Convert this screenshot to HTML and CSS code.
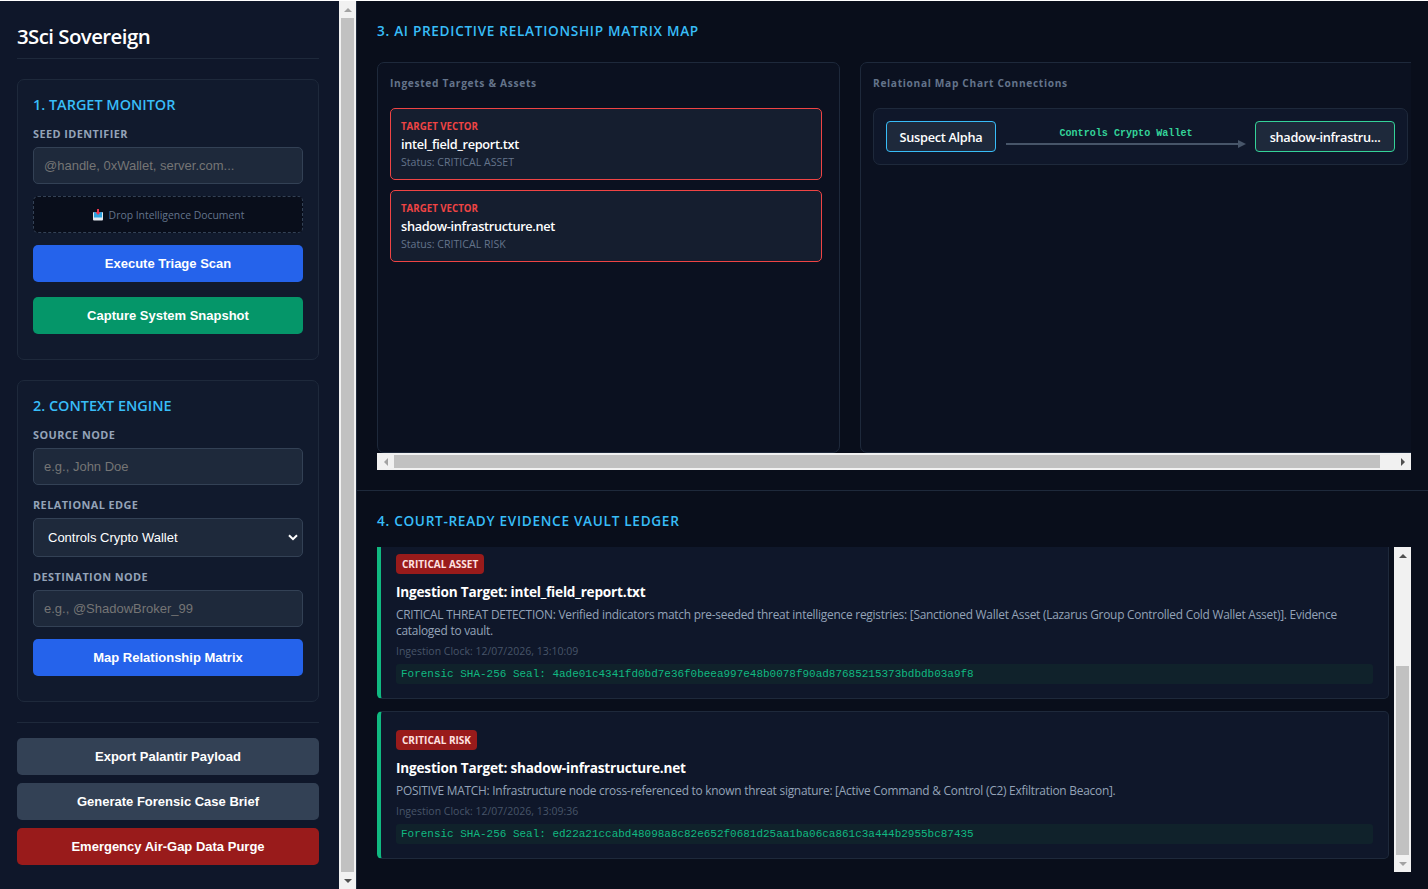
FILE: index.html
```html
<!DOCTYPE html>
<html lang="en">
<head>
<meta charset="utf-8">
<title>3Sci Sovereign</title>
<link rel="stylesheet" href="styles.css">
</head>
<body>
<div class="app">
  <aside class="sidebar">
    <div class="sidebar-content">
      <h1 class="brand">3Sci Sovereign</h1>

      <section class="card">
        <h2 class="card-title">1. TARGET MONITOR</h2>
        <label class="field-label">SEED IDENTIFIER</label>
        <input class="field" type="text" placeholder="@handle, 0xWallet, server.com...">
        <div class="dropzone">
          <svg class="drop-icon" viewBox="0 0 12 12" width="12" height="12" aria-hidden="true">
            <rect x="1" y="3" width="10" height="8.5" rx="1" fill="#e2e8f0"/>
            <rect x="2" y="3" width="8" height="5.5" fill="#2ba3e0"/>
            <path d="M5 0h2v3h1.6L6 6 3.4 3H5z" fill="#e5364f"/>
          </svg>
          <span>Drop Intelligence Document</span>
        </div>
        <button class="btn btn-blue btn-scan">Execute Triage Scan</button>
        <button class="btn btn-green btn-snap">Capture System Snapshot</button>
      </section>

      <section class="card card-context">
        <h2 class="card-title">2. CONTEXT ENGINE</h2>
        <label class="field-label">SOURCE NODE</label>
        <input class="field" type="text" placeholder="e.g., John Doe">
        <label class="field-label">RELATIONAL EDGE</label>
        <div class="select-wrap">
          <select class="field field-select">
            <option>Controls Crypto Wallet</option>
          </select>
          <svg class="chevron" viewBox="0 0 10 7" width="10" height="7" aria-hidden="true">
            <path d="M1 1.2l4 4 4-4" fill="none" stroke="#fff" stroke-width="2"/>
          </svg>
        </div>
        <label class="field-label">DESTINATION NODE</label>
        <input class="field" type="text" placeholder="e.g., @ShadowBroker_99">
        <button class="btn btn-blue btn-scan">Map Relationship Matrix</button>
      </section>

      <div class="actions">
        <button class="btn btn-slate">Export Palantir Payload</button>
        <button class="btn btn-slate">Generate Forensic Case Brief</button>
        <button class="btn btn-red">Emergency Air-Gap Data Purge</button>
      </div>
    </div>
    <div class="vbar" aria-hidden="true">
      <span class="bar-btn"><span class="tri tri-up tri-dim"></span></span>
      <span class="vthumb"></span>
      <span class="bar-btn"><span class="tri tri-down"></span></span>
    </div>
  </aside>

  <main class="main">
    <section class="matrix-section">
      <h2 class="section-title">3. AI PREDICTIVE RELATIONSHIP MATRIX MAP</h2>
      <div class="matrix">
        <div class="matrix-view">
          <div class="panel panel-targets">
            <h3 class="panel-title">Ingested Targets &amp; Assets</h3>
            <div class="target">
              <div class="target-kicker">TARGET VECTOR</div>
              <div class="target-name">intel_field_report.txt</div>
              <div class="target-status">Status: CRITICAL ASSET</div>
            </div>
            <div class="target">
              <div class="target-kicker">TARGET VECTOR</div>
              <div class="target-name">shadow-infrastructure.net</div>
              <div class="target-status">Status: CRITICAL RISK</div>
            </div>
          </div>
          <div class="panel panel-chart">
            <h3 class="panel-title">Relational Map Chart Connections</h3>
            <div class="link-row">
              <div class="node node-source">Suspect Alpha</div>
              <div class="edge">
                <div class="edge-label">Controls Crypto Wallet</div>
                <div class="edge-arrow"><span class="edge-line"></span><span class="edge-head"></span></div>
              </div>
              <div class="node node-dest">shadow-infrastru...</div>
            </div>
          </div>
        </div>
        <div class="hbar" aria-hidden="true">
          <span class="bar-btn"><span class="tri tri-left tri-dim"></span></span>
          <span class="hthumb"></span>
          <span class="bar-btn"><span class="tri tri-right"></span></span>
        </div>
      </div>
    </section>

    <section class="ledger-section">
      <h2 class="section-title">4. COURT-READY EVIDENCE VAULT LEDGER</h2>
      <div class="ledger">
        <div class="ledger-view">
          <div class="ledger-stack">
            <article class="entry">
              <span class="badge">CRITICAL ASSET</span>
              <h4 class="entry-title">Ingestion Target: intel_field_report.txt</h4>
              <p class="entry-text">CRITICAL THREAT DETECTION: Verified indicators match pre-seeded threat intelligence registries: [Sanctioned Wallet Asset (Lazarus Group Controlled Cold Wallet Asset)]. Evidence cataloged to vault.</p>
              <div class="entry-clock">Ingestion Clock: 12/07/2026, 13:10:09</div>
              <div class="entry-hash">Forensic SHA-256 Seal: 4ade01c4341fd0bd7e36f0beea997e48b0078f90ad87685215373bdbdb03a9f8</div>
            </article>
            <article class="entry">
              <span class="badge">CRITICAL RISK</span>
              <h4 class="entry-title">Ingestion Target: shadow-infrastructure.net</h4>
              <p class="entry-text">POSITIVE MATCH: Infrastructure node cross-referenced to known threat signature: [Active Command &amp; Control (C2) Exfiltration Beacon].</p>
              <div class="entry-clock">Ingestion Clock: 12/07/2026, 13:09:36</div>
              <div class="entry-hash">Forensic SHA-256 Seal: ed22a21ccabd48098a8c82e652f0681d25aa1ba06ca861c3a444b2955bc87435</div>
            </article>
          </div>
        </div>
        <div class="vbar" aria-hidden="true">
          <span class="bar-btn"><span class="tri tri-up"></span></span>
          <span class="vtrack"><span class="vthumb vthumb-end"></span></span>
          <span class="bar-btn"><span class="tri tri-down tri-dim"></span></span>
        </div>
      </div>
    </section>
  </main>
</div>
</body>
</html>
```

FILE: styles.css
```css
* { box-sizing: border-box; }

html, body { height: 100%; }

body {
  margin: 0;
  padding-top: 1px;
  background: #fff;
  overflow: hidden;
  font-family: "Open Sans", "Noto Sans", sans-serif;
  color: #fff;
}

.app { display: flex; height: 888px; }

/* Drawn scrollbars */
.vbar, .hbar {
  flex: none;
  display: flex;
  background: #f1f1f1;
}

.vbar { flex-direction: column; width: 17px; }
.hbar { height: 17px; }

.bar-btn {
  flex: none;
  display: flex;
  align-items: center;
  justify-content: center;
  width: 17px;
  height: 17px;
}

.vthumb {
  flex: 1;
  display: block;
  margin: 0 2px;
  background: #c1c1c1;
}

.vtrack {
  flex: 1;
  display: flex;
  flex-direction: column;
  padding-top: 102px;
}

.hthumb {
  flex: none;
  width: 986px;
  margin: 2px 14px 2px 0;
  background: #c1c1c1;
}

.tri { width: 0; height: 0; border-style: solid; border-color: transparent; }
.tri-up { border-width: 0 4px 4px; border-bottom-color: #505050; }
.tri-down { border-width: 4px 4px 0; border-top-color: #505050; }
.tri-left { border-width: 4px 4px 4px 0; border-right-color: #505050; }
.tri-right { border-width: 4px 0 4px 4px; border-left-color: #505050; }
.tri-up.tri-dim { border-bottom-color: #a3a3a3; }
.tri-down.tri-dim { border-top-color: #a3a3a3; }
.tri-left.tri-dim { border-right-color: #a3a3a3; }

/* Sidebar */
.sidebar {
  flex: none;
  display: flex;
  width: 357px;
  height: 888px;
  background: #0f172a;
  border-right: 1px solid #1e293b;
}

.sidebar-content {
  flex: 1;
  min-width: 0;
  padding: 22px 20px 0 17px;
  overflow: hidden;
}

.brand {
  margin: 0 0 20px;
  padding-bottom: 9px;
  border-bottom: 1px solid #1e293b;
  font-size: 20.4px;
  line-height: 26px;
  font-weight: 600;
  letter-spacing: -0.55px;
}

.card {
  display: flex;
  flex-direction: column;
  height: 281px;
  padding: 16px 15px 24px;
  background: #111a2d;
  border: 1px solid #1e293b;
  border-radius: 7px;
}

.card-context { height: 322px; margin-top: 20px; }

.card-title {
  margin: 0;
  font-size: 14.45px;
  line-height: 18px;
  font-weight: 600;
  color: #38bdf8;
}

.field-label {
  margin: 13px 0 6px;
  font-size: 10.88px;
  line-height: 14px;
  font-weight: 700;
  letter-spacing: 0.43px;
  color: #94a3b8;
}

.field {
  display: block;
  width: 100%;
  height: 37px;
  padding: 0 10px;
  background: #1e293b;
  border: 1px solid #334155;
  border-radius: 5px;
  color: #fff;
  font-family: "Liberation Sans", Arial, sans-serif;
  font-size: 13px;
  outline: none;
}

.field::placeholder { color: #757575; opacity: 1; }

.select-wrap { position: relative; }

.field-select {
  height: 39px;
  padding-left: 14px;
  appearance: none;
  -webkit-appearance: none;
}

.chevron { position: absolute; right: 5px; top: 16px; }

.dropzone {
  display: flex;
  align-items: center;
  justify-content: center;
  gap: 5px;
  height: 37px;
  margin-top: 12px;
  background: #090e1b;
  border: 1px dashed #334155;
  border-radius: 5px;
  font-size: 10.4px;
  color: #64748b;
}

.btn {
  display: block;
  width: 100%;
  height: 37px;
  padding: 0;
  border: 0;
  border-radius: 5px;
  color: #fff;
  font-family: "Liberation Sans", Arial, sans-serif;
  font-size: 13px;
  font-weight: 700;
}

.btn-scan { margin-top: 12px; }
.btn-snap { margin-top: 15px; }
.btn-blue { background: #2563eb; }
.btn-green { background: #059669; }
.btn-slate { background: #334155; }
.btn-red { background: #991b1b; }

.actions {
  display: flex;
  flex-direction: column;
  gap: 8px;
  margin-top: 20px;
  padding-top: 15px;
  border-top: 1px solid #1e293b;
}

/* Main */
.main {
  flex: 1;
  min-width: 0;
  display: flex;
  flex-direction: column;
  background: #090e1b;
}

.matrix-section {
  flex: none;
  height: 489px;
  padding: 21px 17px 0 20px;
}

.section-title {
  margin: 0 0 22px;
  font-size: 13.6px;
  line-height: 18px;
  font-weight: 600;
  letter-spacing: 0.7px;
  color: #38bdf8;
}

.matrix { display: flex; flex-direction: column; }

.matrix-view {
  display: flex;
  gap: 20px;
  height: 391px;
  overflow: hidden;
}

.panel {
  flex: none;
  height: 391px;
  padding: 13px 17px 13px 12px;
  background: #0b1120;
  border: 1px solid #1e293b;
  border-radius: 7px;
}

.panel-targets { width: 463px; }
.panel-chart { width: 566px; }

.panel-title {
  margin: 0 0 18px;
  font-size: 10.2px;
  line-height: 14px;
  font-weight: 700;
  letter-spacing: 0.67px;
  color: #64748b;
}

.target {
  height: 72px;
  margin-bottom: 10px;
  padding: 11px 10px 0;
  background: #151e2f;
  border: 1px solid #ef4444;
  border-radius: 5px;
}

.target-kicker {
  font-size: 9.7px;
  line-height: 13px;
  font-weight: 700;
  color: #ef4444;
}

.target-name {
  margin-top: 2px;
  font-size: 12.75px;
  line-height: 18px;
  font-weight: 600;
  letter-spacing: -0.33px;
}

.target-status {
  margin-top: 2px;
  font-size: 10.6px;
  line-height: 14px;
  color: #64748b;
}

.link-row {
  display: flex;
  align-items: flex-start;
  width: 535px;
  height: 57px;
  padding: 12px;
  background: #0f172a;
  border: 1px solid #1e293b;
  border-radius: 7px;
}

.node {
  flex: none;
  height: 31px;
  background: #1e293b;
  border: 1px solid #38bdf8;
  border-radius: 4px;
  font-size: 12.75px;
  line-height: 30px;
  font-weight: 600;
  letter-spacing: -0.3px;
  text-align: center;
  white-space: nowrap;
}

.node-source { width: 110px; }
.node-dest { width: 140px; border-color: #34d399; }

.edge {
  flex: 1;
  min-width: 0;
  margin: 0 9px 0 10px;
  padding-top: 7px;
}

.edge-label {
  font-family: "Liberation Mono", "Courier New", monospace;
  font-size: 10.08px;
  line-height: 12px;
  font-weight: 700;
  text-align: center;
  color: #34d399;
}

.edge-arrow {
  display: flex;
  align-items: center;
  height: 8px;
}

.edge-line { flex: 1; height: 2px; background: #475569; }

.edge-head {
  flex: none;
  width: 0;
  height: 0;
  border-left: 8px solid #475569;
  border-top: 4px solid transparent;
  border-bottom: 4px solid transparent;
}

/* Ledger */
.ledger-section {
  flex: 1;
  min-height: 0;
  padding: 21px 17px 0 20px;
  border-top: 1px solid #1e293b;
}

.ledger-section .section-title { margin-bottom: 17px; }

.ledger { display: flex; height: 325px; }

.ledger-view {
  flex: 1;
  min-width: 0;
  display: flex;
  flex-direction: column-reverse;
  overflow: hidden;
}

.ledger-stack {
  flex: none;
  display: flex;
  flex-direction: column;
  gap: 12px;
  padding: 0 5px 13px 0;
}

.entry {
  display: flex;
  flex-direction: column;
  align-items: flex-start;
  padding: 18px 15px 14px;
  background: #0f172a;
  border: 1px solid #1e293b;
  border-left: 4px solid #10b981;
  border-radius: 5px;
}

.badge {
  height: 20px;
  padding: 0 6px;
  background: #991b1b;
  border-radius: 4px;
  font-size: 10px;
  line-height: 20px;
  font-weight: 700;
  color: #fee2e2;
}

.entry-title {
  margin: 9px 0 0;
  font-size: 13.6px;
  line-height: 18px;
  font-weight: 700;
  letter-spacing: -0.2px;
}

.entry-text {
  margin: 5px 0 0;
  font-size: 11.9px;
  line-height: 16.5px;
  letter-spacing: -0.24px;
  color: #94a3b8;
}

.entry-clock {
  margin-top: 5.5px;
  font-size: 10.5px;
  line-height: 14px;
  color: #475569;
}

.entry-hash {
  width: 100%;
  height: 20px;
  margin-top: 6px;
  padding: 0 5px;
  background: #10222b;
  border-radius: 3px;
  font-family: "Liberation Mono", "Courier New", monospace;
  font-size: 10.98px;
  line-height: 20px;
  color: #10b981;
  white-space: nowrap;
}
```
